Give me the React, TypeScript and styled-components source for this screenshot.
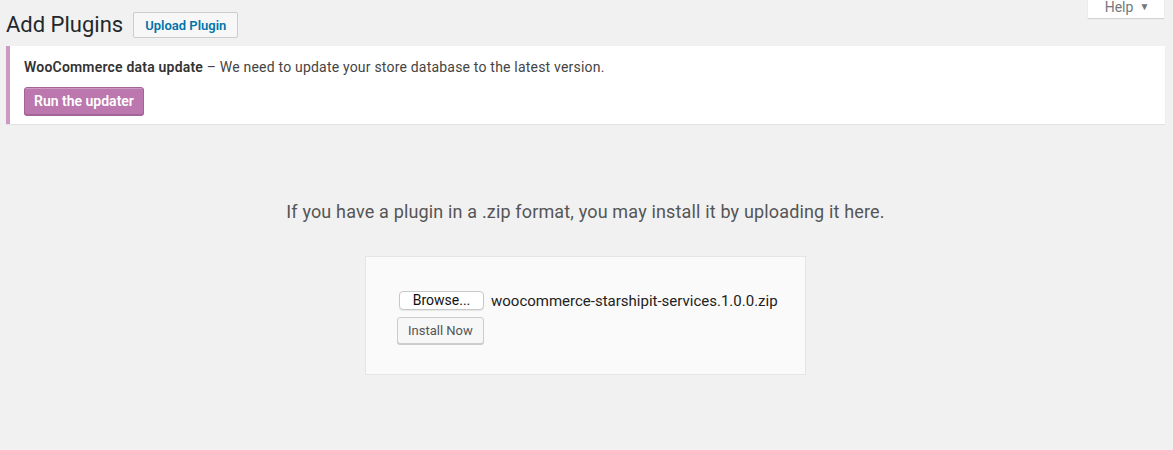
import React, { FunctionComponent } from "react";
import styled, { createGlobalStyle } from "styled-components";

const GlobalStyle = createGlobalStyle`
  html, body {
    margin: 0;
    padding: 0;
    background: #f1f1f1;
  }
  body {
    font-family: Roboto, "Liberation Sans", Arial, sans-serif;
    font-size: 13px;
    color: #444;
  }
`;

const Page = styled.div`
  position: relative;
  min-height: 450px;
  padding: 10px 8px 0 6px;
  box-sizing: border-box;
  overflow: hidden;
`;

const HelpTab = styled.button`
  position: absolute;
  top: -4px;
  right: 9px;
  width: 76px;
  height: 22px;
  padding: 0 0 0 2px;
  border: none;
  background: #fff;
  box-shadow: 0 1px 1px rgba(0, 0, 0, 0.12);
  font-family: inherit;
  font-size: 14px;
  line-height: 18px;
  color: #72777c;
  display: flex;
  align-items: center;
  justify-content: center;
  gap: 6px;

  span {
    font-size: 10px;
  }
`;

const TitleRow = styled.div`
  display: flex;
  align-items: center;
  gap: 10px;
  height: 30px;
`;

const Title = styled.h1`
  margin: 0;
  font-size: 22px;
  font-weight: 400;
  line-height: 30px;
  color: #23282d;
`;

const TitleAction = styled.button`
  height: 26px;
  padding: 0 11px;
  border: 1px solid #ccc;
  border-radius: 2px;
  background: #f7f7f7;
  font-family: inherit;
  font-size: 13px;
  font-weight: 600;
  color: #0073aa;
`;

const Notice = styled.div`
  margin-top: 6px;
  background: #fff;
  border-left: 4px solid #cc99c2;
  box-shadow: 0 1px 1px rgba(0, 0, 0, 0.06);
  padding: 11px 14px 9px 14px;
  display: flex;
  flex-direction: column;
  align-items: flex-start;
  gap: 10px;
`;

const NoticeText = styled.p`
  margin: 0;
  line-height: 20px;
  font-size: 14px;
  letter-spacing: 0.2px;
  color: #444;

  strong {
    font-weight: 600;
    color: #333;
  }
`;

const PurpleButton = styled.button`
  height: 28px;
  padding: 0 9px 1px;
  border: 1px solid #a36597;
  border-radius: 3px;
  background: #bb77ae;
  box-shadow: inset 0 1px 0 rgba(255, 255, 255, 0.25), 0 1px 0 #a36597;
  font-family: inherit;
  font-size: 14px;
  font-weight: 600;
  color: #fff;
`;

const UploadSection = styled.div`
  display: flex;
  flex-direction: column;
  align-items: center;
  padding-top: 76px;
`;

const InstallHelp = styled.p`
  margin: 0;
  font-size: 18px;
  letter-spacing: 0.16px;
  line-height: 24px;
  color: #555;
`;

const UploadForm = styled.form`
  margin-top: 32px;
  width: 441px;
  box-sizing: border-box;
  padding: 34px 24px 30px 31px;
  background: #fafafa;
  border: 1px solid #e5e5e5;
  display: flex;
  flex-direction: column;
  align-items: flex-start;
  gap: 7px;
`;

const FileRow = styled.div`
  display: flex;
  align-items: center;
  gap: 7px;
  padding-left: 2px;
  white-space: nowrap;
`;

const BrowseButton = styled.button`
  flex: none;
  width: 85px;
  height: 19px;
  padding: 0;
  border: 1px solid #c8c8c8;
  border-radius: 4px;
  background: #fff;
  box-shadow: 0 1px 1px rgba(0, 0, 0, 0.08);
  font-family: inherit;
  font-size: 14px;
  line-height: 17px;
  color: #111;
`;

const FileName = styled.span`
  font-size: 15px;
  color: #222;
`;

const SecondaryButton = styled.button`
  height: 27px;
  padding: 0 10px 1px;
  border: 1px solid #ccc;
  border-radius: 3px;
  background: #f7f7f7;
  box-shadow: 0 1px 0 #ccc;
  font-family: inherit;
  font-size: 13px;
  color: #555;
`;

const App: FunctionComponent = () => {
  return (
    <>
      <GlobalStyle />
      <Page>
        <HelpTab type="button">
          Help <span>▼</span>
        </HelpTab>
        <TitleRow>
          <Title>Add Plugins</Title>
          <TitleAction type="button">Upload Plugin</TitleAction>
        </TitleRow>
        <Notice>
          <NoticeText>
            <strong>WooCommerce data update</strong> – We need to update your
            store database to the latest version.
          </NoticeText>
          <PurpleButton type="button">Run the updater</PurpleButton>
        </Notice>
        <UploadSection>
          <InstallHelp>
            If you have a plugin in a .zip format, you may install it by
            uploading it here.
          </InstallHelp>
          <UploadForm onSubmit={(e) => e.preventDefault()}>
            <FileRow>
              <BrowseButton type="button">Browse...</BrowseButton>
              <FileName>woocommerce-starshipit-services.1.0.0.zip</FileName>
            </FileRow>
            <SecondaryButton type="submit">Install Now</SecondaryButton>
          </UploadForm>
        </UploadSection>
      </Page>
    </>
  );
};

export default App;
